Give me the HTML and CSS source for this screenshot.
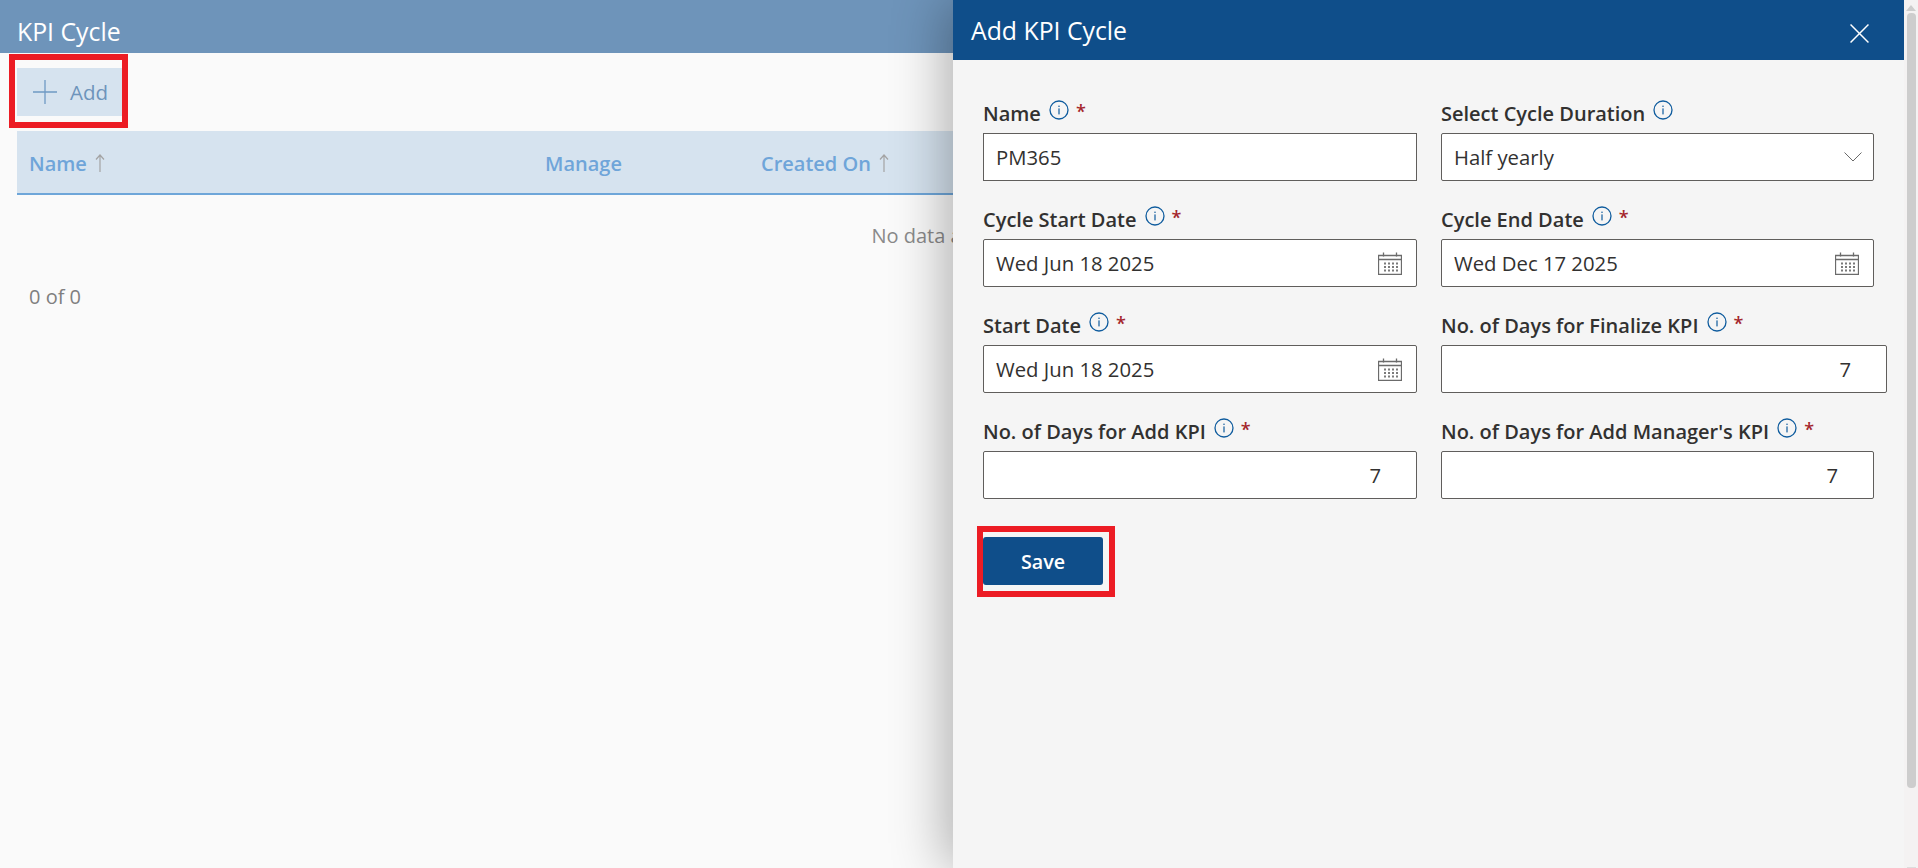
FILE: index.html
```html
<!DOCTYPE html>
<html lang="en">
  <head>
    <meta charset="UTF-8" />
    <meta name="viewport" content="width=device-width, initial-scale=1.0" />
    <title>KPI Cycle</title>
    <link rel="stylesheet" href="styles.css">
  </head>
  <body>
    <svg class="icon-defs" width="0" height="0">
      <defs>
        <symbol id="info" viewBox="0 0 20 20">
          <circle cx="10" cy="10" r="9" fill="none" stroke="#0f5c9e" stroke-width="1.3" />
          <rect x="9.4" y="8.4" width="1.2" height="6" fill="#0f5c9e" />
          <rect x="9.4" y="5.6" width="1.2" height="1.4" fill="#0f5c9e" />
        </symbol>
        <symbol id="calendar" viewBox="0 0 24 23">
          <path d="M0.5 3.5H23.5V22.5H0.5Z M0.5 7.5H23.5" fill="none" stroke="#6b6b6b" stroke-width="1.3" />
          <path d="M5.5 0.5V4.5 M18.5 0.5V4.5" stroke="#6b6b6b" stroke-width="1.3" />
          <path d="M6 10.5H8V12.5H6Z M10 10.5H12V12.5H10Z M14 10.5H16V12.5H14Z M18 10.5H20V12.5H18Z M6 14H8V16H6Z M10 14H12V16H10Z M14 14H16V16H14Z M18 14H20V16H18Z M6 17.5H8V19.5H6Z M10 17.5H12V19.5H10Z M14 17.5H16V19.5H14Z M18 17.5H20V19.5H18Z" fill="#7a7a7a" />
        </symbol>
        <symbol id="sort-up" viewBox="0 0 10 18">
          <path d="M5 1V18 M1 5.5L5 1L9 5.5" fill="none" stroke="#a3a3a3" stroke-width="1.2" />
        </symbol>
      </defs>
    </svg>

    <main class="page">
      <h1 class="page-title">KPI Cycle</h1>
      <div class="toolbar">
        <button type="button" class="add-btn annotated">
          <svg class="add-icon" width="24" height="24" viewBox="0 0 24 24">
            <path d="M12 0V24 M0 12H24" stroke="#6f9ac4" stroke-width="1.3" />
          </svg>
          Add
          <span class="red-box add-box"></span>
        </button>
      </div>
      <div class="table-head">
        <div class="col-name">Name <svg class="sort" width="10" height="18"><use href="#sort-up" /></svg></div>
        <div class="col-manage">Manage</div>
        <div class="col-created">Created On <svg class="sort" width="10" height="18"><use href="#sort-up" /></svg></div>
      </div>
      <div class="no-data">No data available</div>
      <div class="pager">0 of 0</div>
    </main>

    <aside class="drawer">
      <div class="panel">
        <header class="panel-head">
          <h2 class="panel-title">Add KPI Cycle</h2>
          <svg class="close-icon" width="19" height="19" viewBox="0 0 18 18">
            <path d="M0.5 0.5L17.5 17.5 M17.5 0.5L0.5 17.5" stroke="#fff" stroke-width="1.4" />
          </svg>
        </header>

        <form class="kpi-form">
          <div class="field">
            <label class="field-label" for="name">Name
              <svg class="info" width="20" height="20"><use href="#info" /></svg>
              <span class="req">*</span>
            </label>
            <div class="control square"><input id="name" type="text" value="PM365" /></div>
          </div>

          <div class="field">
            <label class="field-label" for="duration">Select Cycle Duration
              <svg class="info" width="20" height="20"><use href="#info" /></svg>
            </label>
            <div class="control">
              <select id="duration">
                <option>Half yearly</option>
              </select>
              <svg class="chevron" width="18" height="10" viewBox="0 0 18 10">
                <path d="M0.5 0.5L9 9L17.5 0.5" fill="none" stroke="#6a6a6a" stroke-width="1" />
              </svg>
            </div>
          </div>

          <div class="field">
            <label class="field-label" for="cycleStart">Cycle Start Date
              <svg class="info" width="20" height="20"><use href="#info" /></svg>
              <span class="req">*</span>
            </label>
            <div class="control">
              <input id="cycleStart" type="text" value="Wed Jun 18 2025" />
              <svg class="calendar" width="24" height="23"><use href="#calendar" /></svg>
            </div>
          </div>

          <div class="field">
            <label class="field-label" for="cycleEnd">Cycle End Date
              <svg class="info" width="20" height="20"><use href="#info" /></svg>
              <span class="req">*</span>
            </label>
            <div class="control">
              <input id="cycleEnd" type="text" value="Wed Dec 17 2025" />
              <svg class="calendar" width="24" height="23"><use href="#calendar" /></svg>
            </div>
          </div>

          <div class="field">
            <label class="field-label" for="startDate">Start Date
              <svg class="info" width="20" height="20"><use href="#info" /></svg>
              <span class="req">*</span>
            </label>
            <div class="control">
              <input id="startDate" type="text" value="Wed Jun 18 2025" />
              <svg class="calendar" width="24" height="23"><use href="#calendar" /></svg>
            </div>
          </div>

          <div class="field wide">
            <label class="field-label" for="finalizeDays">No. of Days for Finalize KPI
              <svg class="info" width="20" height="20"><use href="#info" /></svg>
              <span class="req">*</span>
            </label>
            <div class="control"><input id="finalizeDays" class="num" type="text" value="7" /></div>
          </div>

          <div class="field">
            <label class="field-label" for="addDays">No. of Days for Add KPI
              <svg class="info" width="20" height="20"><use href="#info" /></svg>
              <span class="req">*</span>
            </label>
            <div class="control"><input id="addDays" class="num" type="text" value="7" /></div>
          </div>

          <div class="field">
            <label class="field-label" for="managerDays">No. of Days for Add Manager's KPI
              <svg class="info" width="20" height="20"><use href="#info" /></svg>
              <span class="req">*</span>
            </label>
            <div class="control"><input id="managerDays" class="num" type="text" value="7" /></div>
          </div>

          <div class="form-actions">
            <button type="button" class="save-btn annotated">
              Save
              <span class="red-box save-box"></span>
            </button>
          </div>
        </form>
      </div>

      <div class="scrollbar">
        <span class="arrow-up"></span>
        <span class="thumb"></span>
        <span class="arrow-down"></span>
      </div>
    </aside>
  </body>
</html>
```

FILE: styles.css
```css
html,
body {
  height: 100%;
}

body {
  margin: 0;
  overflow: hidden;
  background-color: #fafafa;
  color: #323130;
  font-family: "Open Sans", "Noto Sans", sans-serif;
  font-size: 20px;
}

.icon-defs {
  display: block;
  height: 0;
}

/* page behind the drawer */
.page-title {
  margin: 0;
  height: 53px;
  padding-left: 17px;
  background-color: #6e94ba;
  color: #fff;
  font-size: 24.8px;
  font-weight: 400;
  line-height: 62px;
  overflow: hidden;
}

.toolbar {
  padding: 15px 0 15px 17px;
  display: flex;
}

.annotated {
  position: relative;
}

.add-btn {
  display: flex;
  align-items: center;
  gap: 13px;
  width: 105px;
  height: 48px;
  padding: 0 0 0 16px;
  border: none;
  background-color: #d6e3ef;
  color: #6e94bb;
  font-family: inherit;
  font-size: 20.5px;
}

.add-icon {
  flex: none;
}

.red-box {
  position: absolute;
  border: 6px solid #ec1c24;
}

.add-box {
  top: -14px;
  left: -8px;
  right: -6px;
  bottom: -12px;
}

.save-box {
  top: -11px;
  left: -6px;
  right: -12px;
  bottom: -12px;
}

.table-head {
  display: grid;
  grid-template-columns: 516px 216px 1fr;
  align-items: center;
  box-sizing: border-box;
  width: 1870px;
  height: 64px;
  padding-top: 2px;
  margin-left: 17px;
  background-color: #d6e3ef;
  border-bottom: 2px solid #6ea6d9;
  color: #6fa5d9;
  font-weight: 600;
}

.table-head > div {
  padding-left: 12px;
  display: flex;
  align-items: center;
  gap: 8px;
}

.no-data {
  width: 1870px;
  margin-left: 17px;
  height: 82px;
  line-height: 82px;
  text-align: center;
  color: #8a8a8a;
}

.pager {
  padding-left: 29px;
  margin-top: 8px;
  line-height: 24px;
  color: #7f7f7f;
}

/* drawer */
.drawer {
  position: absolute;
  top: 0;
  right: 0;
  bottom: 0;
  display: flex;
}

.panel {
  width: 951px;
  background-color: #f5f5f5;
  box-shadow: -8px 0 50px rgba(0, 0, 0, 0.3);
}

.panel-head {
  display: flex;
  align-items: center;
  justify-content: space-between;
  height: 60px;
  padding: 0 35px 0 18px;
  background-color: #0f4e8a;
}

.panel-title {
  margin: 0;
  color: #fff;
  font-size: 24.8px;
  font-weight: 400;
}

.close-icon {
  margin-top: 6px;
}

.kpi-form {
  display: grid;
  grid-template-columns: 434px 433px;
  column-gap: 24px;
  row-gap: 18px;
  padding: 33px 0 0 30px;
}

.field-label {
  display: flex;
  align-items: center;
  gap: 8px;
  height: 40px;
  font-size: 20px;
  font-weight: 600;
  white-space: nowrap;
}

.info {
  margin-top: -6px;
  flex: none;
}

.req {
  margin-left: -1px;
  margin-top: -5px;
  color: #a4262c;
  font-size: 18px;
  font-weight: 600;
}

.control {
  display: flex;
  align-items: center;
  height: 46px;
  padding-right: 14px;
  border: 1px solid #605e5c;
  border-radius: 2px;
  background-color: #fff;
}

.control.square {
  border-radius: 0;
}

.wide {
  width: 446px;
}

.control input,
.control select {
  flex: 1;
  min-width: 0;
  height: 100%;
  padding: 0 0 0 12px;
  border: none;
  outline: none;
  background: transparent;
  color: #323130;
  font-family: inherit;
  font-size: 20.3px;
  appearance: none;
}

.control input.num {
  padding-right: 21px;
  text-align: right;
}

.calendar {
  flex: none;
}

.chevron {
  flex: none;
  margin-right: -3px;
}

.form-actions {
  grid-column: 1 / -1;
  margin-top: 20px;
}

.save-btn {
  width: 120px;
  height: 48px;
  padding: 0;
  border: none;
  border-radius: 3px;
  background-color: #0f4e8a;
  color: #fff;
  font-family: inherit;
  font-size: 19.7px;
  font-weight: 600;
}

/* page scrollbar */
.scrollbar {
  width: 14px;
  background-color: #f4f2f2;
  display: flex;
  flex-direction: column;
  align-items: center;
}

.arrow-up {
  margin-top: 5px;
  border: 5px solid transparent;
  border-top: none;
  border-bottom: 6px solid #cdcdcd;
}

.thumb {
  width: 9px;
  height: 775px;
  margin-top: 2px;
  border-radius: 4px;
  background-color: #cdcdcd;
}

.arrow-down {
  margin-top: auto;
  width: 9px;
  height: 1px;
  background-color: #dddddd;
}
```
